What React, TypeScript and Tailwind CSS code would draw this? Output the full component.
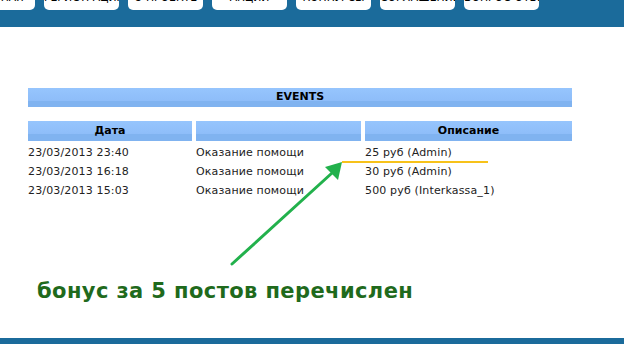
const menu = ["ГЛАВНАЯ", "РЕГИСТРАЦИЯ", "О ПРОЕКТЕ", "АКЦИИ", "КОНКУРСЫ", "СОГЛАШЕНИЕ", "ВОПРОС-ОТВЕТ"];

const rows = [
  { date: "23/03/2013 23:40", type: "Оказание помощи", desc: "25 руб (Admin)" },
  { date: "23/03/2013 16:18", type: "Оказание помощи", desc: "30 руб (Admin)" },
  { date: "23/03/2013 15:03", type: "Оказание помощи", desc: "500 руб (Interkassa_1)" },
];

const bar =
  "bg-[linear-gradient(to_bottom,#96c5fd_0%,#8ebdf9_66%,#80b3f0_66%,#80b3f0_100%)]";

export default function App() {
  return (
    <div className="relative w-[624px] h-[344px] overflow-hidden bg-white font-['DejaVu_Sans',sans-serif] text-[11px] text-black">
      {/* top menu */}
      <div className="h-[27px] bg-[#1b6b9b]">
        <div className="flex gap-[9px] ml-[-40px]">
          {menu.map((m) => (
            <div
              key={m}
              className="shrink-0 w-[75px] h-[10px] overflow-hidden rounded-b-[5px] bg-white"
            >
              <div className="mt-[-9px] text-center whitespace-nowrap text-[12px] leading-[13px] font-['DejaVu_Sans_Condensed',sans-serif] font-light">
                {m}
              </div>
            </div>
          ))}
        </div>
      </div>

      <div className="ml-[28px] w-[544px] mt-[61px]">
        <div className={`h-[19px] ${bar} flex items-center justify-center font-bold text-[11px]`}>
          EVENTS
        </div>

        <div className="grid grid-cols-[164px_165px_207px] gap-x-[4px] mt-[14px]">
          <div className={`h-[20px] ${bar} flex items-center justify-center font-bold`}>Дата</div>
          <div className={`h-[20px] ${bar}`}></div>
          <div className={`h-[20px] ${bar} flex items-center justify-center font-bold`}>Описание</div>
        </div>

        <div className="mt-[3px]">
          {rows.map((r) => (
            <div
              key={r.date}
              className="grid grid-cols-[164px_165px_207px] gap-x-[4px] h-[19px] items-center text-[#222] tracking-[0.15px]"
            >
              <div>{r.date}</div>
              <div>{r.type}</div>
              <div>{r.desc}</div>
            </div>
          ))}
        </div>
      </div>

      <div className="ml-[37px] mt-[78px] text-[21px] leading-[24px] tracking-[0.4px] font-bold text-[#1f6a1c]">
        бонус за 5 постов перечислен
      </div>

      <div className="absolute left-0 right-0 bottom-0 h-[6px] bg-[#1b6b9b]"></div>

      {/* annotation */}
      <svg className="absolute left-0 top-0" width="624" height="344" viewBox="0 0 624 344">
        <line x1="342" y1="162" x2="488" y2="162" stroke="#f7c21a" strokeWidth="2.2" />
        <line x1="232" y1="264" x2="332" y2="173" stroke="#22b14c" strokeWidth="3" strokeLinecap="round" />
        <polygon points="342,162 325,167 338,180" fill="#22b14c" />
      </svg>
    </div>
  );
}
